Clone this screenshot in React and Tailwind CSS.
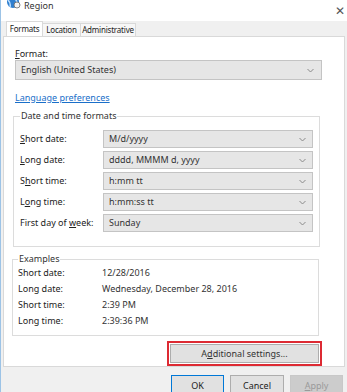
import React from 'react';

const font = { fontFamily: '"Noto Sans", "Open Sans", sans-serif' };

function Chevron() {
  return (
    <svg width="7" height="5" viewBox="0 0 7 5" className="shrink-0">
      <path d="M0.5 1 L3.5 4 L6.5 1" fill="none" stroke="#8a8a8a" strokeWidth="1" />
    </svg>
  );
}

function Select({ value, className = '' }) {
  return (
    <div className={`flex items-center justify-between border border-[#c4c4c4] bg-[#e6e6e6] pl-[5px] pr-[6px] text-[#333] ${className}`}>
      <span>{value}</span>
      <Chevron />
    </div>
  );
}

function U({ children }) {
  return <span className="underline underline-offset-[1px]">{children}</span>;
}

export default function App() {
  const formats = [
    { label: <><U>S</U>hort date:</>, value: 'M/d/yyyy' },
    { label: <><U>L</U>ong date:</>, value: 'dddd, MMMM d, yyyy' },
    { label: <>S<U>h</U>ort time:</>, value: 'h:mm tt' },
    { label: <>L<U>o</U>ng time:</>, value: 'h:mm:ss tt' },
    { label: <>First day of <U>w</U>eek:</>, value: 'Sunday' },
  ];

  const examples = [
    ['Short date:', '12/28/2016'],
    ['Long date:', 'Wednesday, December 28, 2016'],
    ['Short time:', '2:39 PM'],
    ['Long time:', '2:39:36 PM'],
  ];

  return (
    <div style={font} className="w-[347px] h-[392px] overflow-hidden bg-[#f0f0f0] text-[9px] leading-[12px] text-[#222] flex flex-col border-l border-[#9cc3e6]">
      {/* title bar */}
      <div className="h-[21px] bg-white flex items-start shrink-0">
        <svg width="15" height="11" viewBox="0 0 15 11" className="ml-[5px] mt-[-1px]">
          <circle cx="7" cy="3" r="6" fill="#2f7fcf" />
          <path d="M2 1 Q5 4 4 8 M8 -2 Q11 2 12 6" stroke="#bfe0ff" strokeWidth="1.5" fill="none" />
          <circle cx="11" cy="6" r="3" fill="#f2f2f2" stroke="#666" strokeWidth="0.8" />
        </svg>
        <span className="ml-[3px] text-[9px] text-[#333]">Region</span>
        <span className="ml-auto mr-[2px] mt-[4px] text-[12px] leading-[13px] text-[#555]">✕</span>
      </div>

      {/* tabs */}
      <div className="h-[15px] flex items-end pl-[5px] shrink-0 text-[8px] tracking-[-0.2px]">
        <div className="h-[15px] w-[37px] bg-white border border-b-0 border-[#d9d9d9] flex items-center justify-center">Formats</div>
        <div className="h-[13px] w-[38px] bg-[#f7f7f7] border border-l-0 border-b-0 border-[#d9d9d9] flex items-center justify-center">Location</div>
        <div className="h-[13px] w-[55px] bg-[#f7f7f7] border border-l-0 border-b-0 border-[#d9d9d9] flex items-center justify-center">Administrative</div>
      </div>

      {/* tab panel */}
      <div className="mx-[2px] h-[331px] shrink-0 bg-white border border-[#d9d9d9] flex flex-col">
        <div className="ml-[11px] mt-[11px] h-[13px]"><U>F</U>ormat:</div>
        <Select value="English (United States)" className="ml-[11px] w-[307px] h-[21px] pr-[7px]" />
        <div className="ml-[11px] mt-[12px] h-[12px] text-[#1a6fc9] underline underline-offset-[1px]">Language preferences</div>

        <fieldset className="ml-[9px] mt-[6px] w-[307px] border border-[#dcdcdc] pl-[6px] pr-[6px] pb-[14px]">
          <legend className="px-[1px] text-[#333]">Date and time formats</legend>
          <div className="mt-[8px] flex flex-col gap-[3px]">
            {formats.map((f, i) => (
              <div key={i} className="flex items-center h-[18px]">
                <div className="w-[83px] shrink-0">{f.label}</div>
                <Select value={f.value} className="flex-1 h-[18px]" />
              </div>
            ))}
          </div>
        </fieldset>

        <fieldset className="ml-[8px] mt-[6px] w-[307px] border border-[#dcdcdc] pl-[5px] pb-[6px]">
          <legend className="px-[1px] text-[#333]">Examples</legend>
          <div className="flex flex-col">
            {examples.map(([k, v]) => (
              <div key={k} className="flex items-center h-[16px]">
                <div className="w-[84px] shrink-0">{k}</div>
                <div className="text-[#333]">{v}</div>
              </div>
            ))}
          </div>
        </fieldset>

        <div className="mt-[5px] flex justify-end pr-[22px]">
          <div className="w-[155px] h-[25px] border-2 border-[#dd2a33] p-[1px] flex">
            <div className="flex-1 border border-[#adadad] bg-[#e1e1e1] flex items-center justify-center text-[#333]">
              A<U>d</U>ditional settings...
            </div>
          </div>
        </div>
      </div>

      {/* bottom buttons */}
      <div className="flex justify-end gap-[6px] pr-[4px] mt-[8px]">
        <div className="w-[53px] h-[22px] border border-[#0078d7] bg-[#e1e1e1] flex items-center justify-center">OK</div>
        <div className="w-[54px] h-[22px] border border-[#adadad] bg-[#e1e1e1] flex items-center justify-center">Cancel</div>
        <div className="w-[53px] h-[22px] border border-[#c8c8c8] bg-[#cccccc] text-[#9a9a9a] flex items-center justify-center"><U>A</U>pply</div>
      </div>
    </div>
  );
}
